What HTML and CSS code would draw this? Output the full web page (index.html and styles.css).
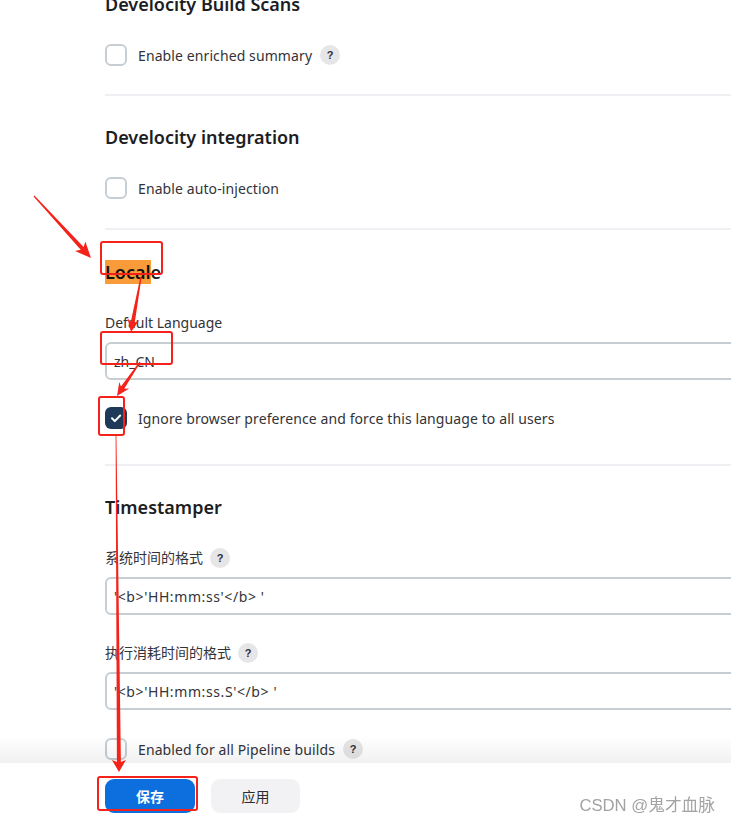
FILE: index.html
```html
<!DOCTYPE html>
<html lang="zh-CN">
<head>
<meta charset="utf-8">
<title>Configure System</title>
<link rel="stylesheet" href="styles.css">
</head>
<body>
<main class="page">
  <section class="sec sec-first">
    <h2 class="sec-title">Develocity Build Scans</h2>
    <div class="cb-row gap-cb">
      <span class="cb"></span>
      <span class="cb-label">Enable enriched summary</span>
      <span class="help">?</span>
    </div>
  </section>

  <section class="sec sec-integration">
    <h2 class="sec-title">Develocity integration</h2>
    <div class="cb-row gap-cb">
      <span class="cb"></span>
      <span class="cb-label">Enable auto-injection</span>
    </div>
  </section>

  <section class="sec sec-locale">
    <h2 class="sec-title"><mark class="hl">Local</mark>e</h2>
    <div class="field-label gap-label">Default Language</div>
    <div class="input">zh_CN</div>
    <div class="cb-row gap-cb2">
      <span class="cb cb-checked">
        <svg viewBox="0 0 22 22" width="22" height="22"><path d="M7 11.3l2.8 2.8 5.4-5.6" fill="none" stroke="#fff" stroke-width="2" stroke-linecap="round" stroke-linejoin="round"/></svg>
      </span>
      <span class="cb-label">Ignore browser preference and force this language to all users</span>
    </div>
  </section>

  <section class="sec sec-last">
    <h2 class="sec-title">Timestamper</h2>
    <div class="field-label gap-label">系统时间的格式 <span class="help">?</span></div>
    <div class="input input-code">'&lt;b&gt;'HH:mm:ss'&lt;/b&gt; '</div>
    <div class="field-label gap-label2">执行消耗时间的格式 <span class="help">?</span></div>
    <div class="input input-code">'&lt;b&gt;'HH:mm:ss.S'&lt;/b&gt; '</div>
    <div class="cb-row gap-cb">
      <span class="cb"></span>
      <span class="cb-label">Enabled for all Pipeline builds</span>
      <span class="help">?</span>
    </div>
  </section>
</main>

<footer class="bottom-bar">
  <button class="btn btn-primary">保存</button>
  <button class="btn btn-secondary">应用</button>
</footer>

<div class="watermark">CSDN @鬼才血脉</div>

<svg class="annot" width="731" height="825" viewBox="0 0 731 825">
  <g fill="none" stroke="#f5221b" stroke-width="2">
    <rect x="101" y="242" width="61" height="32" rx="2"/>
    <rect x="101" y="332" width="71" height="32" rx="2"/>
    <rect x="99" y="397" width="25" height="38" rx="2"/>
    <rect x="98" y="777" width="99" height="33" rx="2"/>
  </g>
  <g fill="#f5221b">
    <polygon points="33.56,196.41 80.73,249.75 75.02,250.96 91,258 85.32,241.48 83.67,247.05 34.44,195.59"/>
    <polygon points="140.41,276.89 130.83,321.8 127.43,318.14 131,332 139.23,320.28 134.77,322.52 141.59,277.11"/>
    <polygon points="139.5,361.66 120.94,386.6 119.31,381.88 117,396 129.25,388.6 124.26,388.84 140.5,362.34"/>
    <polygon points="115.6,435 116.9,762 111.9,760 119,772 125.9,760 120.9,762 116.4,435"/>
  </g>
</svg>
</body>
</html>
```

FILE: styles.css
```css
html, body {
  margin: 0;
  padding: 0;
  background: #fff;
  overflow: hidden;
  height: 100%;
}

body {
  font-family: "Noto Sans", "Noto Sans CJK SC", sans-serif;
  color: #2b2b31;
  font-size: 14px;
}

.page {
  padding-left: 105px;
  margin-top: -8px;
}

.sec {
  padding: 29px 0 28px;
  border-top: 2px solid #f0f0f4;
}

.sec-first {
  padding-top: 0;
  border-top: none;
}

.sec-integration {
  padding-bottom: 29px;
}

.sec-locale {
  padding-top: 30px;
  padding-bottom: 35px;
}

.sec-title {
  margin: 0;
  height: 24px;
  line-height: 24px;
  font-size: 18px;
  font-weight: 600;
  color: #1d1d24;
}

.hl {
  background: #f89b38;
  color: #111;
  padding: 0;
}

.cb-row {
  display: flex;
  align-items: center;
  height: 22px;
}

.gap-cb { margin-top: 28px; }
.gap-cb2 { margin-top: 27px; }
.gap-label { margin-top: 29px; }
.gap-label2 { margin-top: 28px; }

.cb {
  box-sizing: border-box;
  width: 22px;
  height: 22px;
  border: 2px solid #c6ced3;
  border-radius: 6px;
  flex: none;
  margin-right: 11px;
  background: #fff;
}

.cb-checked {
  border: none;
  background: #1f3a58;
  display: flex;
}

.cb-label {
  color: #333338;
  font-size: 14px;
  letter-spacing: 0.1px;
}

.help {
  display: inline-flex;
  align-items: center;
  justify-content: center;
  width: 20px;
  height: 20px;
  border-radius: 50%;
  background: #e6e6e8;
  color: #2f2f35;
  font-size: 11px;
  font-weight: 700;
  margin-left: 8px;
  font-family: "Liberation Sans", sans-serif;
}

.field-label {
  display: flex;
  align-items: center;
  height: 20px;
  line-height: 20px;
  color: #333338;
  font-size: 14px;
}

.field-label .help {
  margin-left: 7px;
}

.input {
  box-sizing: border-box;
  margin-top: 9px;
  height: 38px;
  width: 700px;
  border: 2px solid #c6ced3;
  border-radius: 6px;
  padding: 0 7px;
  display: flex;
  align-items: center;
  color: #333338;
  font-size: 14px;
}

.input-code {
  letter-spacing: 0.6px;
}

.bottom-bar {
  position: fixed;
  left: 0;
  right: 0;
  bottom: 0;
  height: 62px;
  box-sizing: border-box;
  padding: 16px 0 0 105px;
  background: #fff;
  display: flex;
  align-items: flex-start;
  gap: 16px;
}

.bottom-bar::before {
  content: "";
  position: absolute;
  left: 0;
  right: 0;
  top: -27px;
  height: 27px;
  background: linear-gradient(to bottom, rgba(0, 0, 0, 0), rgba(0, 0, 0, 0.055));
}

.btn {
  height: 34px;
  border: none;
  border-radius: 9px;
  font-family: "Noto Sans CJK SC", sans-serif;
  font-size: 14px;
  padding: 0;
}

.btn-primary {
  width: 90px;
  background: #0d6fdd;
  color: #fff;
  font-weight: 700;
}

.btn-secondary {
  width: 89px;
  background: #f2f2f4;
  color: #2b2b31;
}

.watermark {
  position: fixed;
  right: 16px;
  bottom: 9px;
  font-family: "Liberation Sans", "Noto Sans CJK SC", sans-serif;
  font-size: 16.7px;
  line-height: 20px;
  color: #a3a3a3;
  text-shadow: 0 0 1px #fff;
}

.annot {
  position: fixed;
  left: 0;
  top: 0;
  pointer-events: none;
}
```
